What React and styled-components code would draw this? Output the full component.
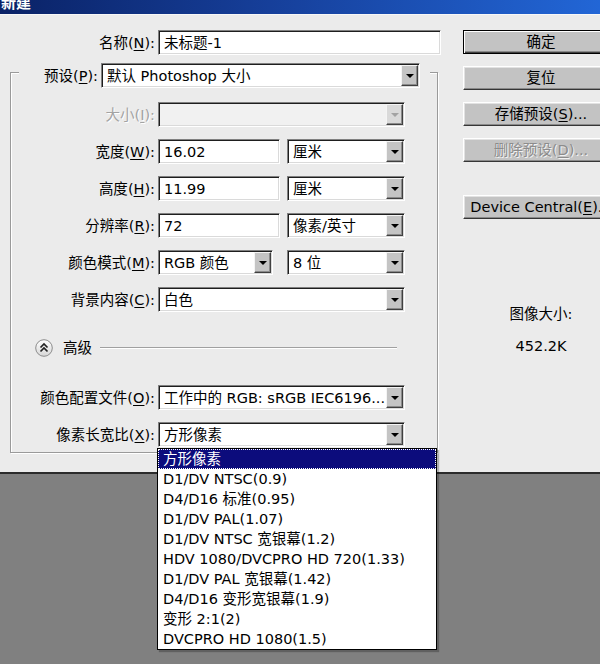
import React from 'react';
import styled, { createGlobalStyle, css } from 'styled-components';

const GlobalStyle = createGlobalStyle`
  html, body {
    margin: 0;
    padding: 0;
  }
  body {
    background: #808080;
    font-family: "DejaVu Sans", "Noto Sans CJK SC", sans-serif;
    font-size: 14.5px;
    line-height: 16px;
    color: #000;
    overflow: hidden;
  }
`;

const Screen = styled('div')({
  width: 600,
  height: 664,
  overflow: 'hidden',
  background: '#808080',
});

const TitleBar = styled('div')({
  height: 14,
  display: 'flex',
  alignItems: 'flex-end',
  overflow: 'hidden',
  background: 'linear-gradient(90deg, #0a2266 0%, #163f9a 45%, #2266d6 100%)',
});

const TitleText = styled('span')({
  color: '#fff',
  fontWeight: 'bold',
  fontSize: 15,
  lineHeight: '15px',
  marginBottom: 3,
  paddingLeft: 1,
});

const Dialog = styled('div')({
  height: 460,
  boxSizing: 'border-box',
  display: 'flex',
  paddingTop: 15,
  background: '#ebebeb',
  borderTop: '1px solid #f7f7f7',
  borderBottom: '2px solid #2b2b2b',
});

const FormColumn = styled('div')({
  width: 441,
  flexShrink: 0,
});

const Row = styled('div')({
  display: 'flex',
  alignItems: 'center',
  height: 25,
});

const Label = styled('span')`
  width: ${(p) => p.$w}px;
  flex-shrink: 0;
  margin-right: 3px;
  text-align: right;
  white-space: nowrap;
  ${(p) =>
    p.$disabled &&
    css`
      color: #a3a3a3;
      text-shadow: 1px 1px 0 #fff;
    `}
`;

const Key = styled('u')({
  textUnderlineOffset: 2,
});

const sunken = css`
  box-sizing: border-box;
  height: 25px;
  border: 1px solid;
  border-color: #808080 #fff #fff #808080;
  box-shadow: inset 1px 1px 0 #1e1e1e, inset -1px -1px 0 #dadada;
`;

const TextBox = styled('div')`
  ${sunken};
  width: ${(p) => p.$w}px;
  display: flex;
  align-items: center;
  padding-left: 5px;
  background: #fff;
`;

const Combo = styled('div')`
  ${sunken};
  position: relative;
  width: ${(p) => p.$w}px;
  display: flex;
  align-items: center;
  padding: 1px;
  background: ${(p) => (p.$disabled ? '#f1f1f1' : '#fff')};
`;

const ComboValue = styled('span')({
  flex: 1,
  paddingLeft: 4,
  whiteSpace: 'nowrap',
  overflow: 'hidden',
});

const DropButton = styled('span')`
  box-sizing: border-box;
  width: 17px;
  height: 21px;
  flex-shrink: 0;
  display: flex;
  align-items: center;
  justify-content: center;
  background: ${(p) => (p.$disabled ? '#d9d9d9' : '#c4c4c4')};
  border: 1px solid;
  border-color: #f4f4f4 #404040 #404040 #f4f4f4;
  box-shadow: inset -1px -1px 0 #8a8a8a;
  &::after {
    content: '';
    border-left: 4px solid transparent;
    border-right: 4px solid transparent;
    border-top: 4px solid ${(p) => (p.$disabled ? '#a2a2a2' : '#000')};
  }
`;

const GroupBox = styled('div')({
  width: 428,
  boxSizing: 'border-box',
  margin: '17px 0 0 10px',
  paddingBottom: 5,
  border: '1px solid #9a9a9a',
  boxShadow: 'inset 1px 1px 0 #fff, 1px 1px 0 #fff',
});

const Legend = styled('div')({
  display: 'flex',
  alignItems: 'center',
  width: 'fit-content',
  height: 25,
  margin: '-10px 0 0 8px',
  paddingRight: 10,
  background: '#ebebeb',
});

const GroupBody = styled('div')({
  display: 'flex',
  flexDirection: 'column',
  gap: 12,
  marginTop: 14,
});

const Pair = styled('div')({
  display: 'flex',
  gap: 7,
});

const AdvancedRow = styled('div')({
  display: 'flex',
  alignItems: 'center',
  height: 18,
  margin: '15px 40px 16px 24px',
});

const AdvancedText = styled('span')({
  marginLeft: 10,
});

const EtchedLine = styled('div')({
  flex: 1,
  marginLeft: 8,
  borderTop: '1px solid #a0a0a0',
  borderBottom: '1px solid #fff',
});

const DropList = styled('ul')({
  position: 'absolute',
  top: 'calc(100% + 2px)',
  left: -2,
  zIndex: 10,
  width: 280,
  boxSizing: 'border-box',
  margin: 0,
  padding: 0,
  listStyle: 'none',
  background: '#fff',
  border: '1px solid #000',
  boxShadow: '2px 2px 1px rgba(0, 0, 0, 0.25)',
});

const ListItem = styled('li')`
  height: 20px;
  line-height: 20px;
  padding-left: 5px;
  white-space: nowrap;
  ${(p) =>
    p.$selected &&
    css`
      background: #0c0c7c;
      color: #fff;
      outline: 1px dotted #fff;
      outline-offset: -1px;
    `}
`;

const SideColumn = styled('div')({
  width: 156,
  flexShrink: 0,
  marginLeft: 22,
  display: 'flex',
  flexDirection: 'column',
  gap: 12,
});

const Button = styled('div')`
  box-sizing: border-box;
  height: 24px;
  margin-top: ${(p) => p.$mt || 0}px;
  display: flex;
  align-items: center;
  justify-content: center;
  white-space: nowrap;
  background: #c3c3c3;
  border: 1px solid;
  border-color: #fff #363636 #363636 #fff;
  box-shadow: inset -1px -1px 0 #8a8a8a, inset 1px 1px 0 #e2e2e2;
  ${(p) =>
    p.$default &&
    css`
      border-color: #000;
      box-shadow: inset 1px 1px 0 #fff, inset -1px -1px 0 #404040,
        inset -2px -2px 0 #8a8a8a;
    `}
  ${(p) =>
    p.$disabled &&
    css`
      color: #8c8c8c;
      text-shadow: 1px 1px 0 #f2f2f2;
    `}
`;

const SizeInfo = styled('div')({
  marginTop: 75,
  textAlign: 'center',
  lineHeight: '17px',
});

const SizeValue = styled('div')({
  marginTop: 15,
});

const AdvancedIcon = () => (
  <svg width="18" height="18" viewBox="0 0 18 18">
    <defs>
      <linearGradient id="advBg" x1="0" y1="0" x2="0" y2="1">
        <stop offset="0" stopColor="#ffffff" />
        <stop offset="1" stopColor="#d6d6d6" />
      </linearGradient>
    </defs>
    <circle cx="9" cy="9" r="8.3" fill="url(#advBg)" stroke="#8c8c8c" />
    <path
      d="M5.5 8.5 L9 5 L12.5 8.5 M5.5 12.5 L9 9 L12.5 12.5"
      fill="none"
      stroke="#222"
      strokeWidth="1.7"
    />
  </svg>
);

const ratios = [
  '方形像素',
  'D1/DV NTSC(0.9)',
  'D4/D16 标准(0.95)',
  'D1/DV PAL(1.07)',
  'D1/DV NTSC 宽银幕(1.2)',
  'HDV 1080/DVCPRO HD 720(1.33)',
  'D1/DV PAL 宽银幕(1.42)',
  'D4/D16 变形宽银幕(1.9)',
  '变形 2:1(2)',
  'DVCPRO HD 1080(1.5)',
];

const Field = ({ label, k, disabled }) => (
  <Label $w={144} $disabled={disabled}>
    {label}(<Key>{k}</Key>):
  </Label>
);

const App = () => {
  return (
    <Screen>
      <GlobalStyle />
      <TitleBar>
        <TitleText>新建</TitleText>
      </TitleBar>
      <Dialog>
        <FormColumn>
          <Row>
            <Label $w={155}>
              名称(<Key>N</Key>):
            </Label>
            <TextBox $w={283}>未标题-1</TextBox>
          </Row>

          <GroupBox>
            <Legend>
              <Label $w={79}>
                预设(<Key>P</Key>):
              </Label>
              <Combo $w={319}>
                <ComboValue>默认 Photoshop 大小</ComboValue>
                <DropButton />
              </Combo>
            </Legend>

            <GroupBody>
              <Row>
                <Field label="大小" k="I" disabled />
                <Combo $w={247} $disabled>
                  <ComboValue />
                  <DropButton $disabled />
                </Combo>
              </Row>
              <Row>
                <Field label="宽度" k="W" />
                <Pair>
                  <TextBox $w={122}>16.02</TextBox>
                  <Combo $w={118}>
                    <ComboValue>厘米</ComboValue>
                    <DropButton />
                  </Combo>
                </Pair>
              </Row>
              <Row>
                <Field label="高度" k="H" />
                <Pair>
                  <TextBox $w={122}>11.99</TextBox>
                  <Combo $w={118}>
                    <ComboValue>厘米</ComboValue>
                    <DropButton />
                  </Combo>
                </Pair>
              </Row>
              <Row>
                <Field label="分辨率" k="R" />
                <Pair>
                  <TextBox $w={122}>72</TextBox>
                  <Combo $w={118}>
                    <ComboValue>像素/英寸</ComboValue>
                    <DropButton />
                  </Combo>
                </Pair>
              </Row>
              <Row>
                <Field label="颜色模式" k="M" />
                <Pair>
                  <Combo $w={115}>
                    <ComboValue>RGB 颜色</ComboValue>
                    <DropButton />
                  </Combo>
                  <Combo $w={118} style={{ marginLeft: 7 }}>
                    <ComboValue>8 位</ComboValue>
                    <DropButton />
                  </Combo>
                </Pair>
              </Row>
              <Row>
                <Field label="背景内容" k="C" />
                <Combo $w={247}>
                  <ComboValue>白色</ComboValue>
                  <DropButton />
                </Combo>
              </Row>

              <AdvancedRow>
                <AdvancedIcon />
                <AdvancedText>高级</AdvancedText>
                <EtchedLine />
              </AdvancedRow>

              <Row>
                <Field label="颜色配置文件" k="O" />
                <Combo $w={247}>
                  <ComboValue>工作中的 RGB: sRGB IEC6196...</ComboValue>
                  <DropButton />
                </Combo>
              </Row>
              <Row>
                <Field label="像素长宽比" k="X" />
                <Combo $w={247}>
                  <ComboValue>方形像素</ComboValue>
                  <DropButton />
                  <DropList>
                    {ratios.map((r, i) => (
                      <ListItem key={r} $selected={i === 0}>
                        {r}
                      </ListItem>
                    ))}
                  </DropList>
                </Combo>
              </Row>
            </GroupBody>
          </GroupBox>
        </FormColumn>

        <SideColumn>
          <Button $default>确定</Button>
          <Button>复位</Button>
          <Button>
            存储预设(<Key>S</Key>)...
          </Button>
          <Button $disabled>
            删除预设(<Key>D</Key>)...
          </Button>
          <Button $mt={21}>
            Device Central(<Key>E</Key>)...
          </Button>
          <SizeInfo>
            <div>图像大小:</div>
            <SizeValue>452.2K</SizeValue>
          </SizeInfo>
        </SideColumn>
      </Dialog>
    </Screen>
  );
};

export default App;
